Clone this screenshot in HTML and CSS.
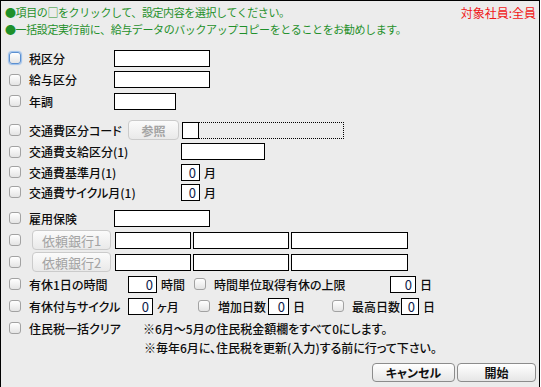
FILE: index.html
```html
<!DOCTYPE html>
<html lang="ja">

<head>
    <meta charset="UTF-8">
    <title>一括設定</title>
    <link rel="stylesheet" href="styles.css">
</head>

<body>
    <div class="window">
        <div class="head">
            <div class="notes">
                <p class="note">●項目の□をクリックして、設定内容を選択してください。</p>
                <p class="note">●一括設定実行前に、給与データのバックアップコピーをとることをお勧めします。</p>
            </div>
            <div class="target">対象社員:全員</div>
        </div>

        <div class="rows">
            <div class="row h22">
                <span class="chk focus"></span>
                <span class="lbl w85">税区分</span>
                <span class="field w96"></span>
            </div>
            <div class="row h21">
                <span class="chk"></span>
                <span class="lbl w85">給与区分</span>
                <span class="field w96"></span>
            </div>
            <div class="row h22">
                <span class="chk"></span>
                <span class="lbl w85">年調</span>
                <span class="field w62"></span>
            </div>

            <div class="row h22 gap7">
                <span class="chk"></span>
                <span class="lbl w99">交通費区分コード</span>
                <span class="btn off w51">参照</span>
                <span class="field w17 ml3"></span>
                <span class="dotted"></span>
            </div>
            <div class="row h21">
                <span class="chk"></span>
                <span class="lbl w152">交通費支給区分(1)</span>
                <span class="field w84"></span>
            </div>
            <div class="row h20">
                <span class="chk"></span>
                <span class="lbl w152">交通費基準月(1)</span>
                <span class="field num w19">0</span>
                <span class="unit">月</span>
            </div>
            <div class="row h20">
                <span class="chk"></span>
                <span class="lbl w152">交通費サイクル月(1)</span>
                <span class="field num w19">0</span>
                <span class="unit">月</span>
            </div>

            <div class="row h22 gap5">
                <span class="chk"></span>
                <span class="lbl w85">雇用保険</span>
                <span class="field w96"></span>
            </div>
            <div class="row h22">
                <span class="chk"></span>
                <span class="btn off bank">依頼銀行1</span>
                <span class="field w76 ml4"></span>
                <span class="field w96 ml2"></span>
                <span class="field w117 ml2"></span>
            </div>
            <div class="row h22">
                <span class="chk"></span>
                <span class="btn off bank">依頼銀行2</span>
                <span class="field w76 ml4"></span>
                <span class="field w96 ml2"></span>
                <span class="field w117 ml2"></span>
            </div>

            <div class="row h22">
                <span class="chk"></span>
                <span class="lbl w99">有休1日の時間</span>
                <span class="field num w29">0</span>
                <span class="unit w37">時間</span>
                <span class="chk"></span>
                <span class="lbl w177">時間単位取得有休の上限</span>
                <span class="field num w26">0</span>
                <span class="unit">日</span>
            </div>
            <div class="row h22">
                <span class="chk"></span>
                <span class="lbl w99">有休付与サイクル</span>
                <span class="field num w25">0</span>
                <span class="unit w45">ヶ月</span>
                <span class="chk"></span>
                <span class="lbl w50">増加日数</span>
                <span class="field num w21">0</span>
                <span class="unit w43">日</span>
                <span class="chk"></span>
                <span class="lbl w49">最高日数</span>
                <span class="field num w18">0</span>
                <span class="unit">日</span>
            </div>
            <div class="row h22">
                <span class="chk"></span>
                <span class="lbl w114">住民税一括クリア</span>
                <span class="memo">※6月～5月の住民税金額欄をすべて0にします。</span>
            </div>
            <div class="row h16">
                <span class="memo indent">※毎年6月に、住民税を更新(入力)する前に行って下さい。</span>
            </div>
        </div>

        <div class="footer">
            <button class="btn cmd">キャンセル</button>
            <button class="btn cmd start">開始</button>
        </div>
    </div>
</body>

</html>
```

FILE: styles.css
```css
body {
    margin: 0;
    background: #ffffff;
    font-family: "Noto Sans CJK JP", sans-serif;
    font-size: 12px;
    font-weight: 500;
    color: #0d0d0d;
    font-feature-settings: "palt";
}

.window {
    width: 538px;
    height: 386px;
    background: #ececec;
    border: 1px solid #000000;
    border-bottom: none;
    position: relative;
}

.head {
    display: flex;
    justify-content: space-between;
    padding: 3px 3px 0 4px;
}

.note {
    margin: 0;
    line-height: 17px;
    font-size: 11px;
    font-weight: normal;
    letter-spacing: -0.4px;
    font-feature-settings: normal;
    color: #1f902a;
}

.target {
    line-height: 17px;
    font-weight: normal;
    color: #f01818;
}

.rows {
    margin-top: 9px;
    display: flex;
    flex-direction: column;
}

.row {
    display: flex;
    align-items: center;
    padding-left: 8px;
}

.h22 { height: 22px; }
.h21 { height: 21px; }
.h20 { height: 20px; }
.h16 { height: 16px; }
.gap7 { margin-top: 7px; }
.gap5 { margin-top: 5px; }

.chk {
    width: 10px;
    height: 10px;
    border: 1px solid #a2a2a2;
    border-radius: 3px;
    background: linear-gradient(#ffffff, #e4e4e4);
    margin-right: 8px;
    flex: none;
}

.chk.focus {
    border-color: #5b8fd0;
    box-shadow: 0 0 1px 1px #9cc0ec;
}

.lbl {
    flex: none;
    white-space: nowrap;
}

.w85 { width: 85px; }
.w99 { width: 99px; }
.w114 { width: 114px; }
.w152 { width: 152px; }
.w177 { width: 176px; }
.w51 { width: 51px; }
.w50 { width: 50px; }
.w49 { width: 49px; }

.field {
    flex: none;
    box-sizing: border-box;
    height: 17px;
    border: 1px solid #000000;
    background: #ffffff;
    line-height: 15px;
}

.field.w96 { width: 96px; }
.field.w62 { width: 62px; }
.field.w84 { width: 84px; }
.field.w76 { width: 76px; }
.field.w117 { width: 117px; }
.field.w17 { width: 17px; }
.field.w19 { width: 19px; }
.field.w29 { width: 29px; }
.field.w26 { width: 26px; }
.field.w25 { width: 25px; }
.field.w21 { width: 21px; }
.field.w18 { width: 18px; }

.num {
    text-align: right;
    padding-right: 3px;
    font-size: 13px;
    font-weight: normal;
    color: #0b1a4a;
}

.ml2 { margin-left: 2px; }
.ml3 { margin-left: 3px; }
.ml4 { margin-left: 4px; }

.dotted {
    width: 144px;
    height: 15px;
    border: 1px dotted #000000;
    border-left: none;
    box-sizing: content-box;
}

.unit {
    margin-left: 4px;
    flex: none;
}

.unit.w37 { width: 33px; }
.unit.w45 { width: 41px; }
.unit.w43 { width: 39px; }

.btn {
    box-sizing: border-box;
    display: flex;
    align-items: center;
    justify-content: center;
    border-radius: 4px;
    font-family: inherit;
    font-size: 12px;
    font-feature-settings: "palt";
    flex: none;
}

.off {
    height: 20px;
    border: 1px solid #cbcbcb;
    background: linear-gradient(#fbfbfb, #e9e9e9);
    color: #a3a3a3;
    font-weight: bold;
}

.bank {
    width: 79px;
    margin-left: 3px;
    font-weight: normal;
    font-size: 13px;
}

.memo {
    white-space: nowrap;
}

.indent {
    margin-left: 135px;
}

.footer {
    position: absolute;
    right: 3px;
    top: 362px;
    display: flex;
    gap: 2px;
}

.cmd {
    height: 19px;
    padding: 0;
    border: 1px solid #8c8c8c;
    background: linear-gradient(#ffffff, #e6e6e6);
    color: #111111;
    font-weight: bold;
    width: 83px;
}

.cmd.start {
    width: 79px;
}
```
